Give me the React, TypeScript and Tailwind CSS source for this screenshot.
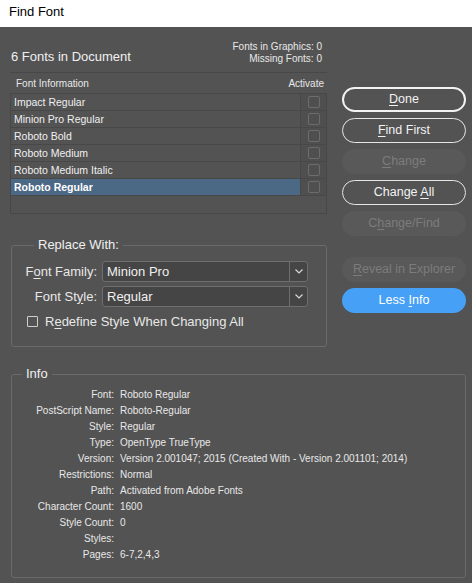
import React from 'react';

const fonts = [
  'Impact Regular',
  'Minion Pro Regular',
  'Roboto Bold',
  'Roboto Medium',
  'Roboto Medium Italic',
  'Roboto Regular',
];

const info: [string, string][] = [
  ['Font:', 'Roboto Regular'],
  ['PostScript Name:', 'Roboto-Regular'],
  ['Style:', 'Regular'],
  ['Type:', 'OpenType TrueType'],
  ['Version:', 'Version 2.001047; 2015 (Created With - Version 2.001101; 2014)'],
  ['Restrictions:', 'Normal'],
  ['Path:', 'Activated from Adobe Fonts'],
  ['Character Count:', '1600'],
  ['Style Count:', '0'],
  ['Styles:', ''],
  ['Pages:', '6-7,2,4,3'],
];

function Btn({ pre, u, post, kind }: { pre: string; u: string; post: string; kind: 'primary' | 'normal' | 'disabled' | 'blue' }) {
  const styles = {
    primary: 'border-2 border-[#f2f2f2] text-[#f2f2f2]',
    normal: 'border border-[#e6e6e6] text-[#f2f2f2]',
    disabled: 'bg-[#595959] text-[#7c7c7c]',
    blue: 'bg-[#46a0f5] text-white',
  };
  return (
    <div className={`h-[25px] w-[124px] rounded-full flex items-center justify-center text-[12.5px] ${styles[kind]}`}>
      <span>
        {pre}
        <span className="underline underline-offset-2">{u}</span>
        {post}
      </span>
    </div>
  );
}

function Select({ value }: { value: string }) {
  return (
    <div className="flex h-[21px] w-[206px] rounded-[3px] border border-[#6e6e6e] bg-[#454545] text-[13px] text-[#f0f0f0]">
      <div className="flex-1 flex items-center pl-[4px]">{value}</div>
      <div className="w-[18px] border-l border-[#6e6e6e] flex items-center justify-center">
        <svg width="8" height="5" viewBox="0 0 8 5">
          <path d="M0.5 0.5 L4 4 L7.5 0.5" fill="none" stroke="#d8d8d8" strokeWidth="1.2" />
        </svg>
      </div>
    </div>
  );
}

export default function App() {
  return (
    <div className="w-[472px] h-[583px] flex flex-col overflow-hidden" style={{ fontFamily: '"Liberation Sans", Arial, sans-serif' }}>
      <div className="h-[27px] shrink-0 bg-white flex items-center pl-[9px] pb-[3px] text-[13px] text-black">Find Font</div>
      <div className="flex-1 bg-[#535353] text-[#e8e8e8]">
        <div className="flex">
          <div className="ml-[10px] w-[317px]">
            <div className="h-[46px] flex items-end justify-between border-b border-[#484848] pr-[5px]">
              <div className="pb-[7px] pl-[1px] text-[13px] leading-[16px] text-[#f0f0f0]">6 Fonts in Document</div>
              <div className="pb-[7px] text-[10px] leading-[12px] text-right">
                <div>Fonts in Graphics: 0</div>
                <div>Missing Fonts: 0</div>
              </div>
            </div>
            <div className="h-[20px] flex items-center justify-between pl-[6px] pr-[3px] pt-[1px] text-[10px]">
              <span>Font Information</span>
              <span>Activate</span>
            </div>
            <div className="h-[121px] border border-[#484848]">
              {fonts.map((f, i) => {
                const sel = i === fonts.length - 1;
                return (
                  <div key={f} className="flex h-[17px] border-b border-[#484848]">
                    <div className={`flex-1 flex items-center pl-[3px] pt-[2px] text-[10.5px] ${sel ? 'bg-[#4b6885] font-bold text-white' : 'text-[#f0f0f0]'}`}>{f}</div>
                    <div className="w-[26px] bg-[#4f4f4f] border-l border-[#484848] flex items-center justify-center">
                      <div className="w-[12px] h-[12px] border border-[#6c6c6c] rounded-[2px]" />
                    </div>
                  </div>
                );
              })}
            </div>

            <fieldset className="ml-[1px] mt-[23px] w-[316px] h-[110px] border border-[#6a6a6a] rounded-[3px] px-[12px]">
              <legend className="ml-[10px] px-[4px] text-[13px] leading-[16px] text-[#f0f0f0]">Replace With:</legend>
              <div className="mt-[8px] flex items-center gap-[5px] text-[13px]">
                <span className="w-[73px] text-right">F<span className="underline underline-offset-2">o</span>nt Family:</span>
                <Select value="Minion Pro" />
              </div>
              <div className="mt-[4px] flex items-center gap-[5px] text-[13px]">
                <span className="w-[73px] text-right">Font St<span className="underline underline-offset-2">y</span>le:</span>
                <Select value="Regular" />
              </div>
              <div className="mt-[5px] flex items-center gap-[7px] text-[13px]">
                <div className="ml-[3px] w-[11px] h-[11px] border border-[#cfcfcf] rounded-[1px]" />
                <span>R<span className="underline underline-offset-2">e</span>define Style When Changing All</span>
              </div>
            </fieldset>
          </div>
          <div className="ml-[15px] mt-[60px] flex flex-col gap-[6px]">
            <Btn pre="" u="D" post="one" kind="primary" />
            <Btn pre="" u="F" post="ind First" kind="normal" />
            <Btn pre="" u="C" post="hange" kind="disabled" />
            <Btn pre="Change " u="A" post="ll" kind="normal" />
            <Btn pre="C" u="h" post="ange/Find" kind="disabled" />
            <div className="h-[9px]" />
            <Btn pre="" u="R" post="eveal in Explorer" kind="disabled" />
            <Btn pre="Less " u="I" post="nfo" kind="blue" />
          </div>
        </div>

        <fieldset className="ml-[11px] mt-[19px] w-[455px] h-[212px] border border-[#6a6a6a] rounded-[3px]">
          <legend className="ml-[10px] px-[4px] text-[13px] leading-[16px] text-[#f0f0f0]">Info</legend>
          <div className="mt-[4px] flex flex-col text-[10px]">
            {info.map(([k, v]) => (
              <div key={k} className="flex h-[16px] items-center">
                <span className="w-[102px] text-right">{k}</span>
                <span className="ml-[6px]">{v}</span>
              </div>
            ))}
          </div>
        </fieldset>
      </div>
    </div>
  );
}
